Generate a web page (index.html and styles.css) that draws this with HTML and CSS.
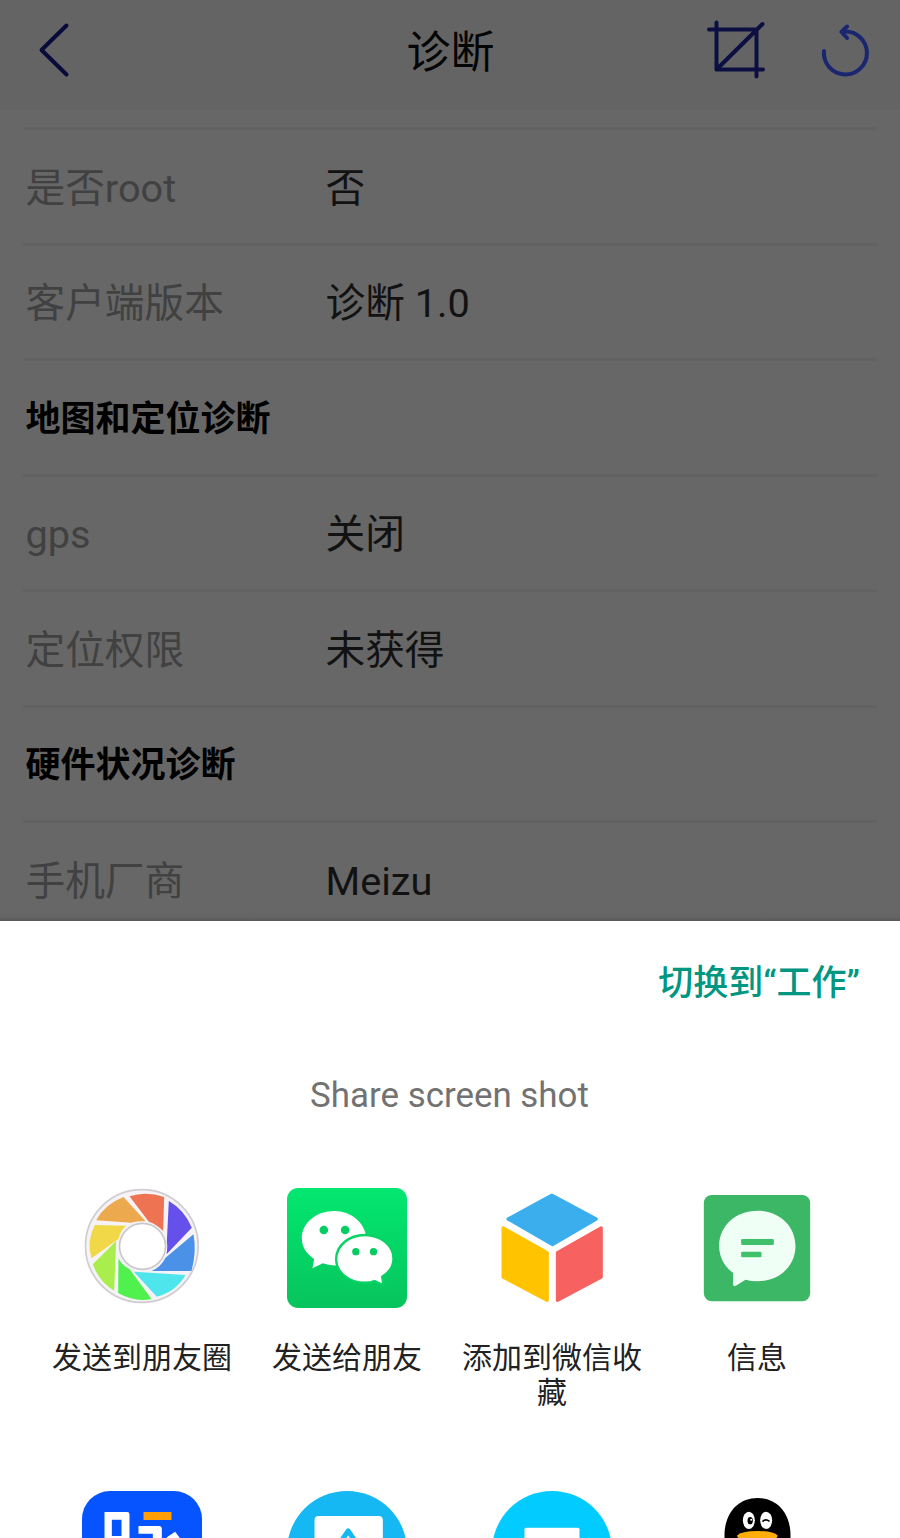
FILE: index.html
```
<!DOCTYPE html>
<html lang="zh-CN">
<head>
<meta charset="utf-8">
<title>诊断</title>
<link rel="stylesheet" href="styles.css">
</head>
<body>
<div class="screen">
  <div class="page">
    <header class="topbar">
      <svg class="back" viewBox="0 0 40 60" width="40" height="60"><path d="M36.500 5.500L11.500 30L36.500 54.500"/></svg>
      <h1 class="title">诊断</h1>
      <div class="tools">
        <svg class="crop" viewBox="0 0 60 60" width="60" height="60"><path d="M9.500 2.500V49.500H56M2 9.500H49.500V56.500M9.500 49.500L55.500 4"/></svg>
        <svg class="refresh" viewBox="0 0 50 54" width="50" height="54"><path d="M3 27A21.500 21.500 0 1 0 23 7.500"/><path d="M26 2.500L20.500 8L26 14"/></svg>
      </div>
    </header>
    <main class="list">
      <div class="row"><span class="label">是否root</span><span class="value">否</span></div>
      <div class="row"><span class="label">客户端版本</span><span class="value">诊断 1.0</span></div>
      <div class="row"><h2 class="section">地图和定位诊断</h2></div>
      <div class="row"><span class="label">gps</span><span class="value">关闭</span></div>
      <div class="row"><span class="label">定位权限</span><span class="value">未获得</span></div>
      <div class="row"><h2 class="section">硬件状况诊断</h2></div>
      <div class="row"><span class="label">手机厂商</span><span class="value">Meizu</span></div>
    </main>
  </div>
  <section class="sheet">
    <div class="switch">切换到“工作”</div>
    <div class="sheet-title">Share screen shot</div>
    <div class="apps">
      <div class="app">
        <svg class="icon" viewBox="37.500 39 360 360">
          <circle cx="217" cy="213" r="169" fill="#f5f3f5" stroke="#d0ccd2" stroke-width="5"/>
          <path fill="#ee7352" d="M180 64Q230 48 284 66L281 168Q262 148 238 140Z"/>
          <path fill="#eda94e" d="M162 66L228 138Q200 139 185 143L80 136Q105 88 162 66Z"/>
          <path fill="#f0d849" d="M76 150L170 152Q152 168 147 192L66 250Q50 200 76 150Z"/>
          <path fill="#a9ee4d" d="M140 198L134 347Q88 320 70 268Z"/>
          <path fill="#50f04d" d="M147 250Q155 270 180 282L246 372Q195 382 146 354Z"/>
          <path fill="#4ee5ec" d="M193 290L348 300Q320 350 262 365Z"/>
          <path fill="#4c91e8" d="M372 178Q382 230 366 288L246 288Q275 275 288 248Z"/>
          <path fill="#6650ec" d="M298 78Q345 105 367 158L291 238Q295 215 292 200Z"/>
          <circle cx="219" cy="214" r="69" fill="#fff" stroke="#cbc8cd" stroke-width="5"/>
        </svg>
        <span class="name">发送到朋友圈</span>
      </div>
      <div class="app">
        <svg class="icon" viewBox="37.500 39 360 360">
          <defs><linearGradient id="wechat" x2="0" y2="1"><stop stop-color="#03e770"/><stop offset="1" stop-color="#07c45c"/></linearGradient></defs>
          <rect x="37.500" y="39" width="360" height="360" rx="34" fill="url(#wechat)"/>
          <path fill="#fff" d="M179 108C125 108 82 144 82 190C82 216 96 237 119 252L114 280L145 265Q165 273 190 271L276 190C272 143 230 108 179 108Z"/>
          <circle cx="148" cy="165" r="13" fill="#08ce62"/><circle cx="212" cy="165" r="13" fill="#08ce62"/>
          <path fill="#fff" stroke="#07d263" stroke-width="7" d="M271 180C223 180 185 212 185 252C185 292 223 323 271 323Q288 323 300 318L327 331L323 305C344 292 357 274 357 251C357 211 319 180 271 180Z"/>
          <circle cx="244" cy="230" r="11" fill="#08cc61"/><circle cx="297" cy="230" r="11" fill="#08cc61"/>
        </svg>
        <span class="name">发送给朋友</span>
      </div>
      <div class="app">
        <svg class="icon" viewBox="37.500 39 360 360" stroke-width="10" stroke-linejoin="round">
          <path fill="#3baeed" stroke="#3baeed" d="M217 61L350 132L219 209L86 132Z"/>
          <path fill="#ffc300" stroke="#ffc300" d="M71 159L203 233V376L71 306Z"/>
          <path fill="#f76260" stroke="#f76260" d="M365 159L234 233V376L365 306Z"/>
        </svg>
        <span class="name">添加到微信收藏</span>
      </div>
      <div class="app">
        <svg class="icon" viewBox="37.500 39 360 360">
          <rect x="58" y="60" width="319" height="319" rx="24" fill="#3bb765"/>
          <path fill="#f0fff5" d="M219 107C154 107 104 152 104 213C104 247 120 275 146 294V331Q148 335 154 332L183 314Q200 319 219 319C284 319 333 273 333 213C333 152 284 107 219 107Z"/>
          <rect x="170" y="192" width="98" height="18" rx="4" fill="#3fc06b"/><rect x="170" y="230" width="61" height="17" rx="4" fill="#3fc06b"/>
        </svg>
        <span class="name">信息</span>
      </div>
      <div class="app">
        <svg class="icon" viewBox="67.500 63 360 360">
          <rect x="67.500" y="63" width="360" height="360" rx="84" fill="#0554ff"/>
          <path fill="#fff" fill-rule="evenodd" d="M135 126H203Q210 126 210 133V300H186V230H157V300H135ZM157 149H186V198H157Z"/>
          <path fill="#ff9f05" d="M252 126H336V150H252Z"/>
          <path fill="#fff" d="M237 168H298Q307 168 307 177V300H280V191H237ZM322 202L347 185L361 204L345 225H322Z"/>
        </svg>
      </div>
      <div class="app">
        <svg class="icon" viewBox="682.500 63 360 360">
          <circle cx="862.500" cy="243" r="180" fill="#16b8f4"/>
          <rect x="765" y="138" width="205" height="190" rx="12" fill="#fff"/>
          <path d="M839 222L866 183L893 222" fill="none" stroke="#16b8f4" stroke-width="15" stroke-linejoin="round"/>
        </svg>
      </div>
      <div class="app">
        <svg class="icon" viewBox="67.500 63 360 360">
          <circle cx="247.500" cy="243" r="180" fill="#02cbff"/>
          <rect x="165" y="173" width="165" height="150" rx="5" fill="#fff"/>
        </svg>
      </div>
      <div class="app">
        <svg class="icon" viewBox="682.500 63 360 360">
          <path d="M765 240V196C765 130 805 84 864 84S963 130 963 196V240Z"/>
          <ellipse cx="838" cy="151" rx="18" ry="26" fill="#fff"/><ellipse cx="890" cy="151" rx="18" ry="26" fill="#fff"/>
          <ellipse cx="842" cy="152" rx="8" ry="11"/><circle cx="845" cy="149" r="3" fill="#fff"/>
          <path d="M879 155Q888 145 900 154" fill="none" stroke="#000" stroke-width="5"/>
          <path fill="#ffad0a" d="M802 197Q816 183 864 183T925 197Q912 223 864 223T802 197Z"/>
        </svg>
      </div>
    </div>
  </section>
</div>
</body>
</html>
```
FILE: styles.css
```
* { box-sizing: border-box; }
body { margin: 0; font-family: Roboto, "Noto Sans CJK SC", sans-serif; }
.screen { width: 900px; height: 1538px; overflow: hidden; display: flex; flex-direction: column; background: #fff; }
.page { height: 920.500px; flex: none; overflow: hidden; background: linear-gradient(#626464 0, #646464 4px, #646464 108px, #676767 110px, #676767 910px, #646464 917px, #585858 100%); }
.topbar { height: 127px; display: grid; grid-template-columns: 1fr auto 1fr; align-items: start; padding: 20px 29px 0 30px; }
.topbar svg { fill: none; stroke-linecap: round; stroke-linejoin: round; }
.back { stroke: #080a3c; stroke-width: 4; }
.title { margin: 0; padding-top: 2px; font-size: 44px; line-height: 62px; font-weight: 400; color: #050505; }
.tools { display: flex; justify-content: flex-end; gap: 54px; }
.crop { stroke: #0d0f43; stroke-width: 4; }
.refresh { stroke: #1a2770; stroke-width: 4; margin-top: 4px; }
.list { padding: 0 23px; }
.row { height: 115.500px; display: flex; align-items: center; border-top: 3px solid #626262; padding: 5px 0 0 2.500px; font-size: 39.700px; line-height: 56px; }
.label { width: 300px; color: #414141; }
.value { color: #121212; }
.section { margin: 0; font-size: 35px; line-height: 50px; font-weight: 700; color: #000; }
.sheet { flex: none; background: #fff; }
.switch { padding: 38px 40px 0 0; text-align: right; font-size: 35px; line-height: 50px; font-weight: 500; color: #009681; }
.sheet-title { margin-top: 66px; padding-right: 1px; text-align: center; font-size: 34.900px; line-height: 42px; color: #727272; }
.apps { display: grid; grid-template-columns: repeat(4, 205px); grid-auto-rows: 303px; justify-content: center; margin: 71px 1px 0 0; }
.app { display: flex; flex-direction: column; align-items: center; }
.icon { width: 120px; height: 120px; flex: none; }
.name { margin-top: 32px; width: 182px; text-align: center; font-size: 30px; line-height: 35px; color: #222; }
```
